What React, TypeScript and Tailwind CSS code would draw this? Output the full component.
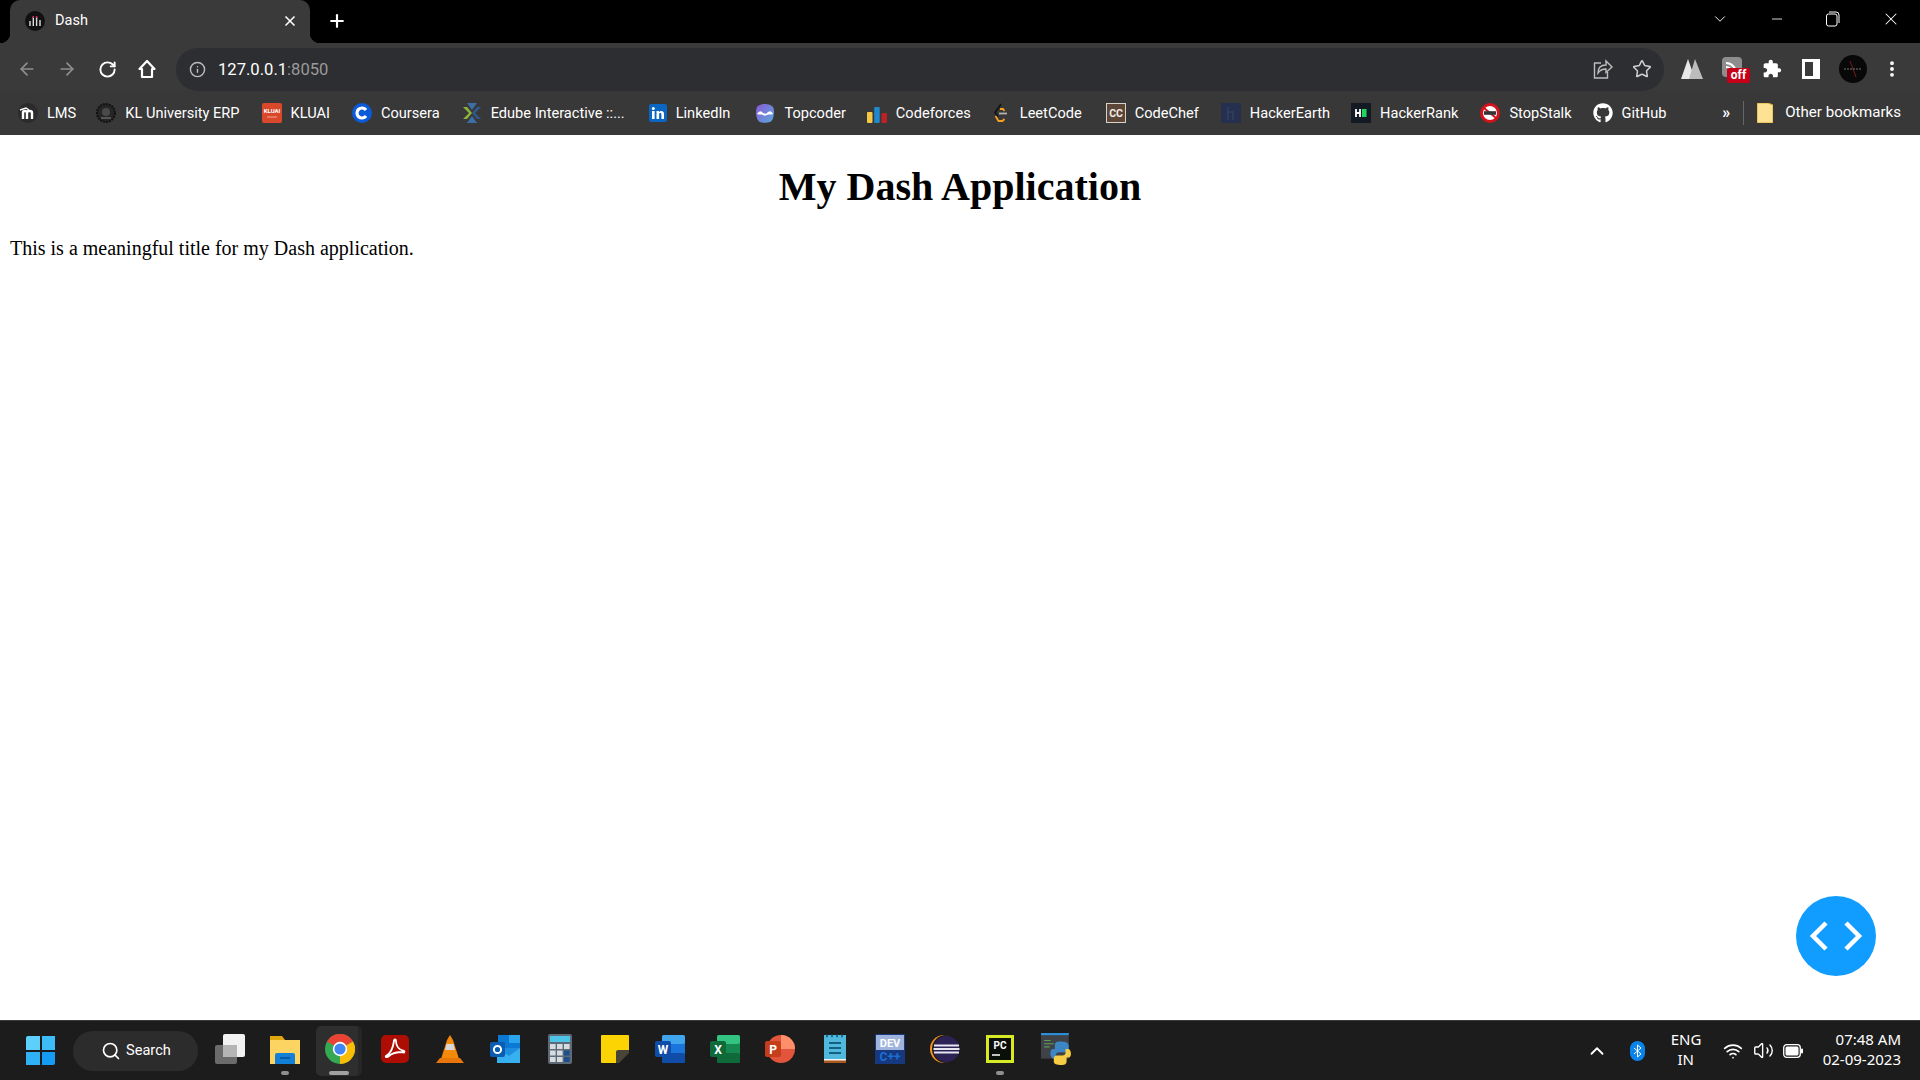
import React from "react";
import {
  ArrowLeft,
  ArrowRight,
  RotateCw,
  Info,
  Star,
  MoreVertical,
  X,
  Plus,
  ChevronDown,
  ChevronUp,
  Minus,
  Search,
  Wifi,
  Volume2,
} from "lucide-react";
import { FaGithub } from "react-icons/fa";

const Svg = ({ size = 20, box = 20, children }: { size?: number; box?: number; children: React.ReactNode }) => (
  <svg width={size} height={size} viewBox={`0 0 ${box} ${box}`} className="shrink-0">
    {children}
  </svg>
);

// bookmark favicons
const favicons: Record<string, React.ReactNode> = {
  lms: (
    <Svg>
      <circle cx="10" cy="10" r="10" fill="#2b2b2b" />
      <path d="M2 7l6-2 3 2" stroke="#fff" strokeWidth="1.5" fill="none" />
      <path d="M5 16V9.5c0-2 4-2 4 0V16M9 9.5c0-2 5-2 5 0V16" stroke="#fff" strokeWidth="2.4" fill="none" />
    </Svg>
  ),
  erp: (
    <Svg>
      <circle cx="10" cy="10" r="9" fill="#262626" stroke="#111" strokeWidth="2" strokeDasharray="2 1" />
      <circle cx="10" cy="9" r="4" fill="#4a4a4a" />
      <path d="M5 15h10" stroke="#555" strokeWidth="2" />
    </Svg>
  ),
  kluai: (
    <Svg>
      <rect width="20" height="20" rx="2" fill="#d9482b" />
      <text x="10" y="10" fontSize="6" fontWeight="700" textAnchor="middle" fill="#fff" fontFamily="Roboto, sans-serif">
        KLUAI
      </text>
      <path d="M5 14h10" stroke="#f3a48f" strokeWidth="1" />
    </Svg>
  ),
  coursera: (
    <Svg>
      <circle cx="10" cy="10" r="10" fill="#0b5ad9" />
      <path d="M14 7a5 5 0 1 0 0 6" stroke="#fff" strokeWidth="3.2" fill="none" />
    </Svg>
  ),
  edube: (
    <Svg>
      <path d="M1 4l6 6-6 6 4 0 5-6-5-6z" fill="#8fb339" />
      <path d="M5 0l5 7 5-7zM5 20l5-7 5 7z" fill="#3d6ea5" />
      <path d="M19 4l-6 6 6 6-4 0-5-6 5-6z" fill="#2f5a8f" />
    </Svg>
  ),
  linkedin: (
    <Svg box={18} size={18}>
      <rect width="18" height="18" rx="2" fill="#0a66c2" />
      <rect x="3" y="7" width="2.6" height="8" fill="#fff" />
      <circle cx="4.3" cy="4.4" r="1.5" fill="#fff" />
      <path d="M7.5 15V7H10v1.2c1.4-2 5-1.6 5 1.6V15h-2.6v-4.6c0-1.8-2.3-1.6-2.3 0V15z" fill="#fff" />
    </Svg>
  ),
  topcoder: (
    <Svg>
      <defs>
        <linearGradient id="tc" x1="0" y1="0" x2="1" y2="1">
          <stop offset="0" stopColor="#8a5bd6" />
          <stop offset="1" stopColor="#5aa8dc" />
        </linearGradient>
      </defs>
      <path d="M2 4c3-4 13-4 16 0 2 4 1 13-3 15-3 1-8 1-10 0C1 17 0 8 2 4z" fill="url(#tc)" />
      <path d="M2 11c3-4 4-3 6-1 2 1 3 1 4 0 2-2 4-3 6 1-2 1-4 0-6 1s-3 1-4 0c-2-1-4 0-6-1z" fill="#fff" />
    </Svg>
  ),
  codeforces: (
    <Svg>
      <rect x="0" y="9" width="5.5" height="11" rx="1" fill="#f5c846" />
      <rect x="7.2" y="4" width="5.5" height="16" rx="1" fill="#1f8acb" />
      <rect x="14.5" y="10" width="5.5" height="10" rx="1" fill="#bd2027" />
    </Svg>
  ),
  leetcode: (
    <Svg>
      <path d="M10 1L4 9.5l3 4" stroke="#111" strokeWidth="1.6" fill="none" />
      <path d="M9 6l3 0 1.5 2M4.5 13l3 5h4l2-2" stroke="#f89f1b" strokeWidth="1.8" fill="none" />
      <path d="M8 10.5h8" stroke="#b3b3b3" strokeWidth="1.8" />
    </Svg>
  ),
  codechef: (
    <Svg>
      <rect x="0.5" y="0.5" width="19" height="19" fill="#5b4638" stroke="#d9d2c9" />
      <text x="10" y="14" fontSize="10.5" fontWeight="700" textAnchor="middle" fill="#f0ebe5" fontFamily="Roboto, sans-serif">
        CC
      </text>
    </Svg>
  ),
  hackerearth: (
    <Svg>
      <rect width="20" height="20" fill="#25304f" />
      <path d="M7 4v13M7 9h5v8" stroke="#323f66" strokeWidth="1.5" fill="none" />
    </Svg>
  ),
  hackerrank: (
    <Svg>
      <rect width="20" height="20" fill="#141a24" />
      <path d="M5 6v8M9 6v8M5 10h4" stroke="#fff" strokeWidth="1.8" />
      <rect x="11" y="6" width="4.5" height="8" fill="#1ed760" />
    </Svg>
  ),
  stopstalk: (
    <Svg>
      <circle cx="10" cy="10" r="8.5" fill="#fff" stroke="#d4121a" strokeWidth="3" />
      <path d="M4 5l12 10" stroke="#d4121a" strokeWidth="2" />
      <rect x="4" y="8.2" width="12" height="3.6" fill="#333" />
    </Svg>
  ),
  github: <FaGithub size={20} color="#fff" className="shrink-0" />,
};

const bookmarks = [
  { name: "LMS", icon: "lms", gap: "mr-[20px]" },
  { name: "KL University ERP", icon: "erp", gap: "mr-[22px]" },
  { name: "KLUAI", icon: "kluai", gap: "mr-[22px]" },
  { name: "Coursera", icon: "coursera", gap: "mr-[22px]" },
  { name: "Edube Interactive ::...", icon: "edube", gap: "mr-[24px]" },
  { name: "LinkedIn", icon: "linkedin", gap: "mr-[25px]" },
  { name: "Topcoder", icon: "topcoder", gap: "mr-[21px]" },
  { name: "Codeforces", icon: "codeforces", gap: "mr-[20px]" },
  { name: "LeetCode", icon: "leetcode", gap: "mr-[24px]" },
  { name: "CodeChef", icon: "codechef", gap: "mr-[22px]" },
  { name: "HackerEarth", icon: "hackerearth", gap: "mr-[21px]" },
  { name: "HackerRank", icon: "hackerrank", gap: "mr-[22px]" },
  { name: "StopStalk", icon: "stopstalk", gap: "mr-[21px]" },
  { name: "GitHub", icon: "github", gap: "mr-0" },
];

const Office = ({ dark, light, letter, mid }: { dark: string; light: string; mid: string; letter: string }) => (
  <Svg size={30} box={30}>
    <rect x="7" y="1" width="23" height="28" rx="2" fill={mid} />
    <rect x="7" y="1" width="23" height="9" rx="2" fill={light} />
    <rect x="7" y="19" width="23" height="10" rx="2" fill={dark} />
    <rect x="0" y="7" width="16" height="16" rx="2" fill={dark} />
    <text x="8" y="20" fontSize="12" fontWeight="700" textAnchor="middle" fill="#fff" fontFamily="Roboto, sans-serif">
      {letter}
    </text>
  </Svg>
);

// taskbar apps, in order
const taskApps: { id: string; icon: React.ReactNode; dot?: boolean; active?: boolean; shift?: string }[] = [
  {
    id: "taskview",
    icon: (
      <Svg size={30} box={30}>
        <rect x="0" y="11" width="22" height="19" rx="2" fill="#6b6b6b" />
        <rect x="8" y="0" width="22" height="23" rx="2" fill="#f2f2f2" />
        <rect x="8" y="11" width="14" height="12" fill="#b5b5b5" />
      </Svg>
    ),
  },
  {
    id: "explorer",
    dot: true,
    icon: (
      <Svg size={32} box={32}>
        <path d="M1 3h12l3 4h15v24H1z" fill="#e2a60f" />
        <rect x="1" y="7" width="30" height="24" fill="#fcd462" />
        <path d="M6 31v-9a2 2 0 0 1 2-2h16a2 2 0 0 1 2 2v9z" fill="#1180d6" />
        <path d="M11 25h10" stroke="#0b4f91" strokeWidth="1.5" />
      </Svg>
    ),
  },
  {
    id: "chrome",
    active: true,
    icon: (
      <Svg size={30} box={30}>
        <circle cx="15" cy="15" r="15" fill="#34a853" />
        <path d="M15 15L2 7.5A15 15 0 0 1 28 7.5z" fill="#ea4335" />
        <path d="M15 15l13-7.5A15 15 0 0 1 15 30z" fill="#fbbc05" />
        <circle cx="15" cy="15" r="7.2" fill="#fff" />
        <circle cx="15" cy="15" r="5.6" fill="#4285f4" />
      </Svg>
    ),
  },
  {
    id: "acrobat",
    icon: (
      <Svg size={28} box={28}>
        <rect width="28" height="28" rx="5" fill="#ae0d03" />
        <path d="M5 21c4-2 7-8 8-15 0-2 2-2 2 0 0 5 3 9 8 10 1 1 0 2-1 1-5 0-11 1-14 4-2 2-4 1-3 0z" fill="none" stroke="#fff" strokeWidth="1.8" />
      </Svg>
    ),
  },
  {
    id: "vlc",
    icon: (
      <Svg size={28} box={28}>
        <path d="M14 0l3 5 6 19H5l6-19z" fill="#f58a0a" />
        <path d="M10.5 9h7l1.5 6H9z" fill="#d8d8d8" />
        <path d="M0 28l4-5h20l4 5z" fill="#e8760a" />
      </Svg>
    ),
  },
  {
    id: "outlook",
    icon: (
      <Svg size={30} box={30}>
        <rect x="8" y="1" width="22" height="15" fill="#0b78d4" />
        <rect x="19" y="1" width="11" height="8" fill="#2aa4ec" />
        <path d="M7 14l23 0v15H7z" fill="#1d8de0" />
        <path d="M7 14l12 8 11-8v15H7z" fill="#37b0f0" />
        <rect x="0" y="8" width="15" height="15" rx="2" fill="#0a5cb0" />
        <circle cx="7.5" cy="15.5" r="3.6" fill="none" stroke="#fff" strokeWidth="2" />
      </Svg>
    ),
  },
  {
    id: "calc",
    icon: (
      <Svg size={30} box={30}>
        <rect x="3" y="0" width="24" height="30" rx="2" fill="#5e6b76" />
        <rect x="5" y="2" width="20" height="6" fill="#4cc5e8" />
        {[0, 1, 2].map((r) =>
          [0, 1, 2].map((c) => (
            <rect key={`${r}${c}`} x={5 + c * 7} y={10 + r * 6.5} width="5.6" height="5" fill={c === 2 && r > 0 ? "#1d4f8c" : "#d6dbe0"} />
          ))
        )}
      </Svg>
    ),
  },
  {
    id: "sticky",
    icon: (
      <Svg size={28} box={28}>
        <path d="M1 0h26a1 1 0 0 1 1 1v16L17 28H1a1 1 0 0 1-1-1V1a1 1 0 0 1 1-1z" fill="#fcd303" />
        <path d="M15 28V17a2 2 0 0 1 2-2h11v3L18 28z" fill="#4a4436" />
      </Svg>
    ),
  },
  { id: "word", icon: <Office dark="#0f4da8" mid="#1b74dc" light="#41a5ee" letter="W" /> },
  { id: "excel", icon: <Office dark="#0e6a39" mid="#15894f" light="#33c481" letter="X" /> },
  {
    id: "ppt",
    icon: (
      <Svg size={30} box={30}>
        <circle cx="16" cy="15" r="14" fill="#e2543b" />
        <path d="M16 1a14 14 0 0 1 14 14H16z" fill="#ff8f6b" />
        <rect x="0" y="7" width="16" height="16" rx="2" fill="#c43e1c" />
        <text x="8" y="20" fontSize="12" fontWeight="700" textAnchor="middle" fill="#fff" fontFamily="Roboto, sans-serif">
          P
        </text>
      </Svg>
    ),
  },
  {
    id: "notepad",
    icon: (
      <Svg size={30} box={30}>
        <rect x="4" y="1" width="22" height="28" fill="#4fb8dc" />
        <rect x="4" y="26" width="22" height="3" fill="#a8571f" />
        <rect x="4" y="25" width="22" height="1.5" fill="#f5f5f5" />
        <path d="M6 2h2M11 2h2M16 2h2M21 2h2" stroke="#1a6f8f" strokeWidth="2.4" />
        <path d="M9 9h12M9 14h12M9 19h12" stroke="#155f7f" strokeWidth="2" />
      </Svg>
    ),
  },
  {
    id: "dev",
    icon: (
      <Svg size={30} box={30}>
        <rect width="30" height="30" fill="#15387f" />
        <rect x="1" y="1" width="28" height="15" fill="#9fb4dc" />
        <text x="15" y="13" fontSize="11" fontWeight="700" textAnchor="middle" fill="#fff" fontFamily="Roboto, sans-serif">
          DEV
        </text>
        <text x="15" y="27" fontSize="12" fontWeight="700" textAnchor="middle" fill="#1b6fd0" fontFamily="Roboto, sans-serif">
          C++
        </text>
      </Svg>
    ),
  },
  {
    id: "eclipse",
    icon: (
      <Svg size={30} box={30}>
        <circle cx="14" cy="15" r="14" fill="#f7941e" />
        <circle cx="16" cy="15" r="14" fill="#1c1c1c" />
        <circle cx="16.5" cy="15" r="13" fill="#2c2255" />
        <path d="M4 11.5h25M3.5 15h26M4 18.5h25" stroke="#e6e6f0" strokeWidth="1.8" />
      </Svg>
    ),
  },
  {
    id: "pycharm",
    dot: true,
    icon: (
      <Svg size={28} box={28}>
        <rect width="28" height="28" fill="#d7ea26" />
        <rect x="3" y="3" width="22" height="22" fill="#0b0f0a" />
        <text x="14" y="14" fontSize="10" fontWeight="700" textAnchor="middle" fill="#fff" fontFamily="Roboto, sans-serif">
          PC
        </text>
        <path d="M6 20h8" stroke="#fff" strokeWidth="1.5" />
      </Svg>
    ),
  },
  {
    id: "python",
    shift: "ml-[4px]",
    icon: (
      <Svg size={32} box={30}>
        <rect x="0" y="0" width="26" height="24" fill="#3f4347" />
        <rect x="0" y="0" width="26" height="2" fill="#2a8fd8" />
        <path d="M3 7h6M3 10h9M3 13h5" stroke="#5e9c5a" strokeWidth="1" />
        <path d="M18 8c-4 0-5 1-5 4v3h-2c-3 0-3 9 1 9h2v-3c0-2 1-3 3-3h6c2 0 3-1 3-3v-3c0-3-3-4-8-4z" fill="#3d86c6" />
        <path d="M19 30c4 0 5-1 5-4v-3h2c3 0 3-8-1-8h-2v3c0 2-1 3-3 3h-5c-2 0-3 1-3 3v3c0 2 3 3 7 3z" fill="#f5cc45" />
      </Svg>
    ),
  },
];

const TabStrip = () => (
  <div className="h-[43px] bg-black flex items-end shrink-0 pl-[10px] text-white">
    <div className="relative w-[300px] h-[43px] bg-[#3a3a3a] rounded-t-[10px] flex items-center pl-[15px] pb-[1px]">
      <span className="absolute left-[-10px] bottom-0 w-[10px] h-[10px] bg-[radial-gradient(circle_at_0_0,#000_10px,#3a3a3a_10.5px)]" />
      <span className="absolute right-[-10px] bottom-0 w-[10px] h-[10px] bg-[radial-gradient(circle_at_100%_0,#000_10px,#3a3a3a_10.5px)]" />
      <Svg>
        <circle cx="10" cy="10" r="10" fill="#111" />
        <path d="M5 10v5M8.3 6v9M11.6 6v9M15 9v6" stroke="#ddd" strokeWidth="1.4" />
        <path d="M8.3 5v2M11.6 5v2" stroke="#d6336c" strokeWidth="1.4" />
      </Svg>
      <span className="ml-[10px] text-[14.5px] leading-none font-['Roboto',sans-serif]">Dash</span>
      <X size={16} strokeWidth={2.5} className="absolute right-[12px] top-[13px]" />
    </div>
    <div className="h-[43px] flex items-center pl-[17px] pb-[1px]">
      <Plus size={20} strokeWidth={2.6} />
    </div>
    <div className="ml-auto h-[43px] flex items-center pb-[6px]">
      <ChevronDown size={18} strokeWidth={1.25} className="mr-[40px]" />
      <Minus size={16} strokeWidth={1.25} className="mr-[41px]" />
      <svg width="14" height="16" viewBox="0 0 14 16" fill="none" stroke="#fff" strokeWidth="1" className="mr-[41px]">
        <rect x="0.5" y="3" width="10.5" height="12" rx="2" />
        <path d="M3 1h7a3 3 0 0 1 3 3v8" />
      </svg>
      <X size={20} strokeWidth={1.25} className="mr-[19px]" />
    </div>
  </div>
);

const Toolbar = () => (
  <div className="h-[48px] bg-[#3a3a3a] pt-[5px] flex shrink-0 text-white">
    <div className="w-[176px] h-[43px] flex items-center pb-[1px]">
      <ArrowLeft size={20} className="ml-[17px] text-[#8f8f8f]" />
      <ArrowRight size={20} className="ml-[20px] text-[#8f8f8f]" />
      <RotateCw size={19} strokeWidth={2.4} className="ml-[21px]" />
      <svg width="20" height="20" viewBox="0 0 20 20" fill="none" stroke="#fff" strokeWidth="2.2" strokeLinejoin="round" className="ml-[20px]">
        <path d="M10 2L2.5 10H5v8h10v-8h2.5z" />
      </svg>
    </div>
    <div className="w-[1488px] h-[43px] bg-[#2d2e31] rounded-full flex items-center">
      <Info size={17} className="ml-[13px] text-[#bdbdbd]" />
      <span className="ml-[12px] mt-[1px] text-[16.6px] leading-none font-['Roboto',sans-serif]">
        127.0.0.1<span className="text-[#9a9a9a]">:8050</span>
      </span>
      <div className="ml-auto flex items-center pb-[1px]">
        <svg width="20" height="22" viewBox="0 0 20 22" fill="none" stroke="#bdbdbd" strokeWidth="1.4" className="mr-[19px]">
          <path d="M8 5H1.5v15h13v-6" />
          <path d="M5 15c0-6 4-8 8-8V3l6 6-6 5.5V11c-4 0-6 1-8 4z" />
        </svg>
        <Star size={20} strokeWidth={1.8} className="mr-[12px] text-[#d0d0d0]" />
      </div>
    </div>
    <div className="flex-1 h-[43px] flex items-center pb-[1px]">
      <svg width="22" height="20" viewBox="0 0 22 20" className="ml-[17px]">
        <path d="M7 0l7 20H0z" fill="#e8e8e8" />
        <path d="M14 0l8 20H8z" fill="#bcbcbc" />
      </svg>
      <div className="relative ml-[19px] w-[20px] h-[24px]">
        <div className="w-[20px] h-[20px] rounded-[4px] bg-[#8d8d8d] flex items-center justify-center">
          <Svg size={14} box={14}>
            <path d="M1 3a10 10 0 0 1 10 10M1 7a6 6 0 0 1 6 6" stroke="#fff" strokeWidth="2" fill="none" />
          </Svg>
        </div>
        <span className="absolute left-[5px] top-[11px] w-[23px] h-[15px] rounded-[2px] bg-[#c60018] text-[12px] leading-[15px] text-center font-bold font-['Roboto',sans-serif]">
          off
        </span>
      </div>
      <svg width="20" height="20" viewBox="0 0 24 24" fill="#fff" className="ml-[20px]">
        <path d="M20.5 11H19V7c0-1.1-.9-2-2-2h-4V3.5C13 2.12 11.88 1 10.5 1S8 2.12 8 3.5V5H4c-1.1 0-1.99.9-1.99 2v3.8H3.5c1.49 0 2.7 1.21 2.7 2.7s-1.21 2.7-2.7 2.7H2V20c0 1.1.9 2 2 2h3.8v-1.5c0-1.49 1.21-2.7 2.7-2.7 1.49 0 2.7 1.21 2.7 2.7V22H17c1.1 0 2-.9 2-2v-4h1.5c1.38 0 2.5-1.12 2.5-2.5S21.88 11 20.5 11z" />
      </svg>
      <div className="ml-[20px] w-[18px] h-[20px] border-[3px] border-r-[7px] border-white" />
      <div className="ml-[19px] w-[28px] h-[28px] rounded-full bg-[#080808] flex items-center justify-center">
        <svg width="24" height="24" viewBox="0 0 24 24" fill="none">
          <path d="M9 4l6 16" stroke="#7a1c1c" strokeWidth="1" />
          <path d="M3 12h18" stroke="#777" strokeWidth="1" strokeDasharray="2 1" />
        </svg>
      </div>
      <MoreVertical size={20} strokeWidth={2.6} className="ml-[15px]" />
    </div>
  </div>
);

const BookmarksBar = () => (
  <div className="h-[44px] bg-[#383838] flex items-center shrink-0 pl-[18px] text-white text-[14.6px] font-['Roboto',sans-serif]">
    {bookmarks.map((b) => (
      <div key={b.name} className={`flex items-center gap-[9px] ${b.gap}`}>
        {favicons[b.icon]}
        <span className="leading-none whitespace-nowrap">{b.name}</span>
      </div>
    ))}
    <span className="ml-auto text-[16px] leading-none font-bold mr-[13px]">»</span>
    <div className="w-px h-[24px] bg-[#666] mr-[13px]" />
    <svg width="16" height="20" viewBox="0 0 16 20" className="shrink-0">
      <path d="M0 0h11l5 2v18H0z" fill="#fde293" stroke="#d9a92e" />
    </svg>
    <span className="ml-[12px] mr-[19px] text-[15.1px] leading-none whitespace-nowrap">Other bookmarks</span>
  </div>
);

const Taskbar = () => (
  <div className="h-[60px] bg-[#1c1c1c] border-t border-[#3a3a3a] flex items-center shrink-0 text-white">
    <div className="ml-[26px] grid grid-cols-2 gap-[2px] w-[29px] h-[29px] shrink-0">
      <span className="bg-[#5cd0fb] rounded-tl-[2px]" />
      <span className="bg-[#3dbdf8]" />
      <span className="bg-[#2fb1f7]" />
      <span className="bg-[#149cf5] rounded-br-[2px]" />
    </div>
    <div className="ml-[18px] w-[125px] h-[40px] rounded-full bg-[#2c2c2c] flex items-center pl-[28px] shrink-0">
      <Search size={20} strokeWidth={2} />
      <span className="ml-[5px] text-[14.6px] leading-none font-['Roboto',sans-serif]">Search</span>
    </div>
    <div className="ml-[4px] flex">
      {taskApps.map((app) => (
        <div key={app.id} className="relative w-[55px] h-[50px] flex items-center justify-center">
          {app.active && <span className="absolute left-[4px] top-0 w-[46px] h-[50px] rounded-[5px] bg-[#2e2e2e] border-r-[4px] border-[#262626]" />}
          <span className={`relative flex mb-[3px] ${app.shift ?? ""}`}>{app.icon}</span>
          {app.dot && <span className="absolute bottom-[1px] left-[24px] w-[8px] h-[4px] rounded-full bg-[#8f8f8f]" />}
          {app.active && <span className="absolute bottom-[1px] left-[17px] w-[20px] h-[4px] rounded-full bg-[#a0a0a0]" />}
        </div>
      ))}
    </div>
    <div className="ml-auto flex items-center font-['Noto_Sans',sans-serif] text-[15px]">
      <ChevronUp size={22} strokeWidth={2} />
      <div className="ml-[22px] w-[15px] h-[20px] rounded-full bg-[#0a84ea] flex items-center justify-center">
        <svg width="9" height="14" viewBox="0 0 9 14" fill="none" stroke="#fff" strokeWidth="1">
          <path d="M1 4l7 6-3.5 3V1L8 4 1 10" />
        </svg>
      </div>
      <div className="ml-[26px] mb-[3px] w-[30px] text-center leading-[20px]">
        <div>ENG</div>
        <div>IN</div>
      </div>
      <Wifi size={20} className="ml-[22px]" />
      <Volume2 size={21} strokeWidth={1.6} className="ml-[10px]" />
      <svg width="20" height="14" viewBox="0 0 20 14" className="ml-[9px]">
        <rect x="0.7" y="0.7" width="16.6" height="12.6" rx="3" fill="none" stroke="#fff" strokeWidth="1.3" />
        <rect x="2.5" y="2.5" width="13" height="9" rx="1.5" fill="#fff" />
        <rect x="18" y="4.5" width="2" height="5" rx="1" fill="#fff" />
      </svg>
      <div className="ml-[20px] mr-[19px] mb-[3px] text-right leading-[20px]">
        <div>07:48 AM</div>
        <div>02-09-2023</div>
      </div>
    </div>
  </div>
);

export default function App() {
  return (
    <div className="h-screen flex flex-col overflow-hidden bg-white">
      <TabStrip />
      <Toolbar />
      <BookmarksBar />
      <main className="relative flex-1 p-[10px] text-black font-['Liberation_Serif',serif]">
        <h1 className="mt-[19px] mb-[27px] text-center text-[40px] leading-[46px] font-bold">My Dash Application</h1>
        <p className="text-[20px] leading-[23px]">This is a meaningful title for my Dash application.</p>
        {/* debug button */}
        <button className="absolute right-[44px] bottom-[44px] w-[80px] h-[80px] rounded-full bg-[#119dff] flex items-center justify-center gap-[14px]">
          <svg width="20" height="30" viewBox="0 0 20 30" fill="none" stroke="#fff" strokeWidth="4.5">
            <path d="M17 2L4 15l13 13" />
          </svg>
          <svg width="20" height="30" viewBox="0 0 20 30" fill="none" stroke="#fff" strokeWidth="4.5">
            <path d="M3 2l13 13L3 28" />
          </svg>
        </button>
      </main>
      <Taskbar />
    </div>
  );
}
